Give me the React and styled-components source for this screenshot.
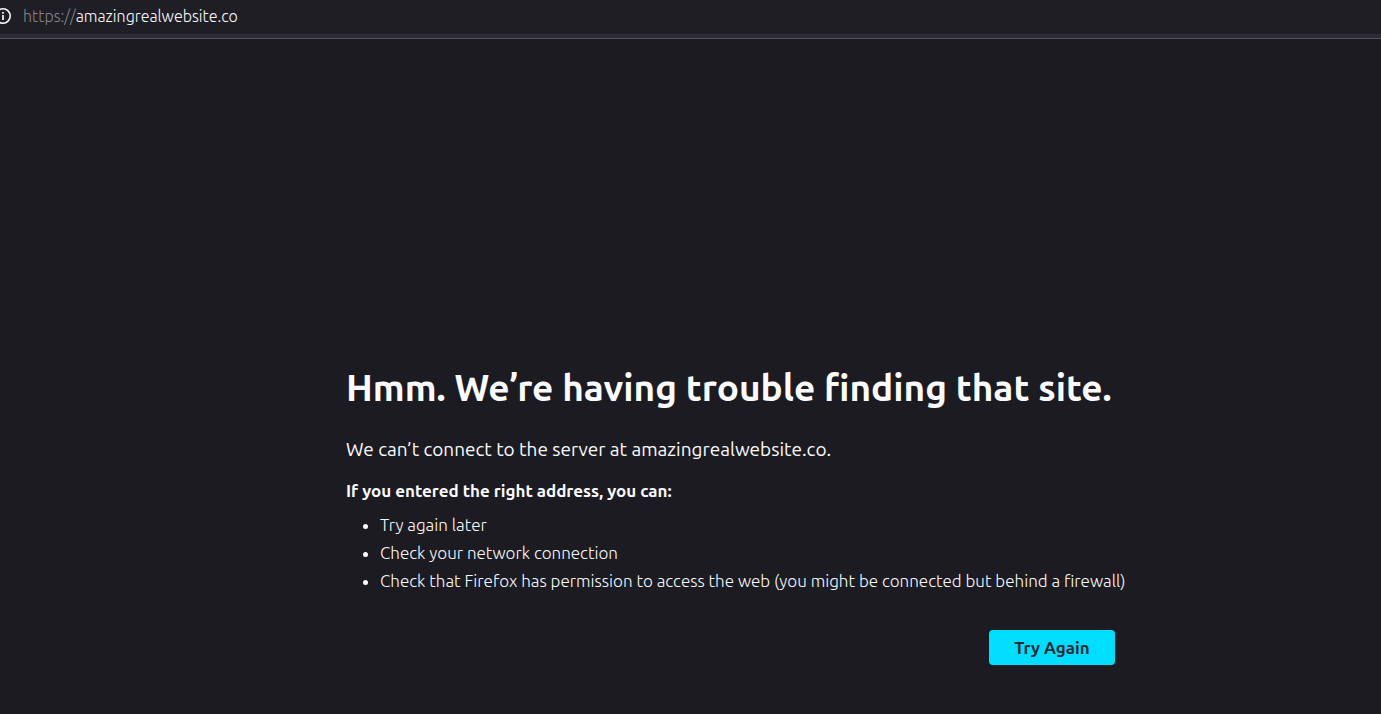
import React from 'react';
import styled, { createGlobalStyle } from 'styled-components';

const Global = createGlobalStyle`
  * { box-sizing: border-box; }
  body {
    margin: 0;
    background: #1c1b22;
    color: #fbfbfe;
    font-family: Ubuntu, "Noto Sans", "Open Sans", sans-serif;
    font-size: 17px;
    font-weight: 300;
  }
`;

const Page = styled.div`
  min-height: 100vh;
  display: flex;
  flex-direction: column;
`;

const AddressBar = styled.header`
  height: 39px;
  display: flex;
  align-items: flex-start;
  background: #1f1e25;
  border-bottom: 1px solid #52525e;
  box-shadow: inset 0 -4px 0 #2b2a33;
`;

const InfoButton = styled.button`
  width: 11px;
  height: 32px;
  padding: 0;
  border: 0;
  display: flex;
  align-items: center;
  justify-content: flex-end;
  overflow: hidden;
  background: none;
  color: #fbfbfe;
  svg { flex: none; }
`;

const Address = styled.a`
  margin-left: 12px;
  font-size: 16px;
  line-height: 33px;
  color: #fbfbfe;
  text-decoration: none;
`;

const Scheme = styled.span`
  color: #85848c;
`;

const Main = styled.main`
  flex: 1;
  display: flex;
  flex-direction: column;
  justify-content: flex-end;
  align-items: center;
  padding: 0 24px 49px 104px;
`;

const Message = styled.section`
  width: 100%;
  max-width: 769px;
`;

const Title = styled.h1`
  margin: 0 0 23px;
  font-size: 37px;
  line-height: 48px;
  font-weight: 600;
`;

const Lead = styled.p`
  margin: 0 0 14px;
  font-size: 19px;
  font-weight: 400;
  line-height: 28px;
`;

const Hint = styled.p`
  margin: 0 0 6px;
  font-weight: 600;
  line-height: 28px;
`;

const Tips = styled.ul`
  margin: 0 0 35px;
  padding-left: 34px;
  line-height: 28px;
  li { white-space: nowrap; }
  li::marker { font-weight: 400; }
`;

const Actions = styled.div`
  display: flex;
  justify-content: flex-end;
`;

const RetryButton = styled.button`
  width: 126px;
  height: 35px;
  padding: 0;
  border: 0;
  border-radius: 4px;
  background: #00ddff;
  color: #2b2a33;
  font: inherit;
  font-weight: 600;
`;

const tips = [
  'Try again later',
  'Check your network connection',
  'Check that Firefox has permission to access the web (you might be connected but behind a firewall)',
];

export default function App() {
  return (
    <Page>
      <Global />
      <AddressBar>
        <InfoButton aria-label="Site information">
          <svg width="16" height="16" viewBox="0 0 16 16" fill="none" stroke="currentColor">
            <circle cx="8" cy="8" r="7.2" strokeWidth="1.6" />
            <path d="M8 7v5M8 4v1.8" strokeWidth="1.7" />
          </svg>
        </InfoButton>
        <Address href="#"><Scheme>https://</Scheme>amazingrealwebsite.co</Address>
      </AddressBar>
      <Main>
        <Message>
          <Title>Hmm. We’re having trouble finding that site.</Title>
          <Lead>We can’t connect to the server at amazingrealwebsite.co.</Lead>
          <Hint>If you entered the right address, you can:</Hint>
          <Tips>{tips.map((tip) => <li key={tip}>{tip}</li>)}</Tips>
          <Actions><RetryButton>Try Again</RetryButton></Actions>
        </Message>
      </Main>
    </Page>
  );
}
